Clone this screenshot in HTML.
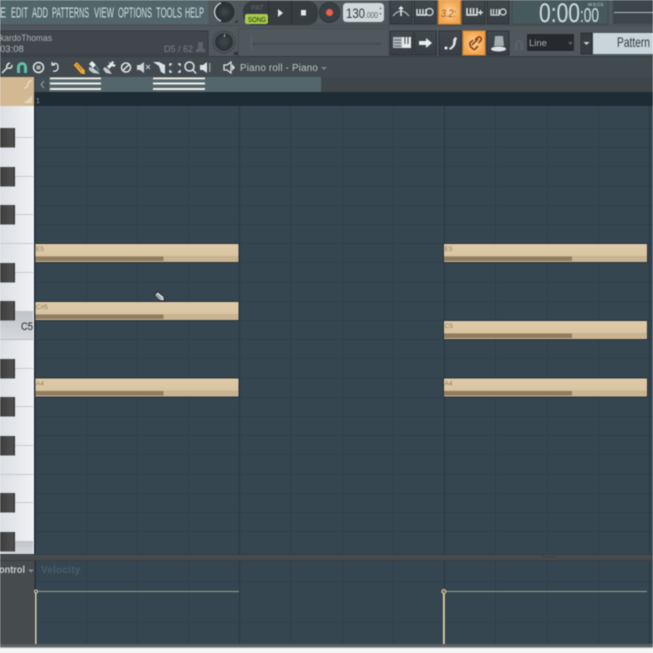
<!DOCTYPE html>
<html><head><meta charset="utf-8"><style>
html,body{margin:0;padding:0;background:#f4f5f5;width:653px;height:653px;overflow:hidden}
svg{display:block;filter:blur(.45px)}
text{font-family:"Liberation Sans",sans-serif}
</style></head><body>
<svg width="653" height="653" viewBox="0 0 653 653" xmlns="http://www.w3.org/2000/svg">
<defs>
<linearGradient id="btn" x1="0" y1="0" x2="0" y2="1"><stop offset="0" stop-color="#42494e"/><stop offset="1" stop-color="#383f44"/></linearGradient>
<radialGradient id="org"><stop offset="0" stop-color="#fbd6a0"/><stop offset="1" stop-color="#f2a44c"/></radialGradient>
<linearGradient id="note" x1="0" y1="0" x2="0" y2="1"><stop offset="0" stop-color="#dfcba9"/><stop offset="1" stop-color="#d6c19d"/></linearGradient>
<linearGradient id="wk" x1="0" y1="0" x2="1" y2="0"><stop offset="0" stop-color="#dcdfe4"/><stop offset="1" stop-color="#eff1f5"/></linearGradient>
<linearGradient id="bk" x1="0" y1="0" x2="1" y2="0"><stop offset="0" stop-color="#3d3d3d"/><stop offset=".85" stop-color="#4f4f4f"/><stop offset="1" stop-color="#2b2b2b"/></linearGradient>
<radialGradient id="knob"><stop offset="0" stop-color="#414a4e"/><stop offset="1" stop-color="#2a3033"/></radialGradient>
<linearGradient id="shade" x1="0" y1="0" x2="0" y2="1"><stop offset="0" stop-color="#bfc4ca"/><stop offset="1" stop-color="#d6d9dd"/></linearGradient>
</defs>

<!-- top area -->
<rect x="0" y="0" width="653" height="57" fill="#51585d"/>
<rect x="0" y="0" width="208" height="24" fill="#50666a"/>
<rect x="0" y="25" width="653" height="1" fill="#464c51"/>
<rect x="0" y="31" width="208" height="24" fill="#40464b" stroke="#33393d"/>
<rect x="238" y="28" width="150" height="1" fill="#474d52"/>
<rect x="238" y="28" width="1" height="29" fill="#474d52"/>
<g fill="#d6dfe1" font-size="14.500">
<text x="0" y="17.500" textLength="6" lengthAdjust="spacingAndGlyphs">E</text>
<text x="11" y="17.500" textLength="17" lengthAdjust="spacingAndGlyphs">EDIT</text>
<text x="32" y="17.500" textLength="16" lengthAdjust="spacingAndGlyphs">ADD</text>
<text x="52" y="17.500" textLength="37" lengthAdjust="spacingAndGlyphs">PATTERNS</text>
<text x="94" y="17.500" textLength="20" lengthAdjust="spacingAndGlyphs">VIEW</text>
<text x="118" y="17.500" textLength="34" lengthAdjust="spacingAndGlyphs">OPTIONS</text>
<text x="156" y="17.500" textLength="26" lengthAdjust="spacingAndGlyphs">TOOLS</text>
<text x="185" y="17.500" textLength="19" lengthAdjust="spacingAndGlyphs">HELP</text>
</g>
<text x="0" y="41" font-size="9.500" fill="#a9b0b3" textLength="52" lengthAdjust="spacingAndGlyphs">kardoThomas</text>
<text x="0" y="52" font-size="9.500" fill="#b4bbbe">03:08</text>
<text x="164" y="52" font-size="9" fill="#7b8286" textLength="29" lengthAdjust="spacingAndGlyphs">D5 / 62</text>
<path d="M198 42h5v7h2v3h-9v-3h2z" fill="#5c6367"/>

<!-- knobs -->
<circle cx="224" cy="12" r="10.500" fill="#2b3135"/>
<path d="M221 21A9.500 9.500 0 0 1 221 3" fill="none" stroke="#d8dfe1" stroke-width="1.300"/>
<circle cx="224.500" cy="12" r="7.500" fill="url(#knob)"/>
<path d="M234 23l4-4v4z" fill="#33393d"/>
<circle cx="224" cy="42" r="11" fill="none" stroke="#30363a" stroke-width="1.200" stroke-dasharray="1.500 1.500"/>
<circle cx="224" cy="42" r="9" fill="url(#knob)"/>
<rect x="224" y="34" width="1" height="3" fill="#aab2b5"/>
<rect x="234" y="52" width="4" height="3" fill="#2d3336"/>

<!-- slider -->
<rect x="251" y="42.500" width="130" height="2.500" fill="#484e53"/>
<rect x="251" y="36" width="1" height="14" fill="#5e656a"/>

<!-- transport -->
<rect x="243" y="1" width="75" height="24" rx="10" fill="#363c40"/>
<rect x="268" y="1" width="1" height="24" fill="#282d30"/>
<rect x="291" y="1" width="1" height="24" fill="#282d30"/>
<text x="251" y="10" font-size="7" fill="#626a6e">PAT</text>
<rect x="245" y="14" width="23" height="10" rx="2" fill="#a8cc4c"/>
<text x="248" y="22" font-size="7.500" fill="#23300f" textLength="18" lengthAdjust="spacingAndGlyphs">SONG</text>
<path d="M278 9l5 4-5 4z" fill="#e2e7e8"/>
<rect x="301" y="10" width="5" height="5.500" fill="#e2e7e8"/>
<circle cx="329.500" cy="12.500" r="10" fill="#394045" stroke="#2c3236"/>
<circle cx="329.500" cy="12.500" r="3.500" fill="#f0604a"/>

<!-- tempo -->
<rect x="343" y="3" width="41" height="19" rx="3.500" fill="#cfd8db"/>
<text x="346" y="18" font-size="14" fill="#2f383c" textLength="19" lengthAdjust="spacingAndGlyphs">130</text>
<text x="365" y="18" font-size="8" fill="#5a6469" textLength="13" lengthAdjust="spacingAndGlyphs">.000</text>
<path d="M379 9l1.500-2 1.500 2zM379 13l1.500 2 1.500-2z" fill="#7a848a"/>

<rect x="388" y="0" width="1" height="57" fill="#474d52"/>
<!-- button rows -->
<g stroke="#2d3337" stroke-width="1">
<rect x="390" y="0" width="22" height="24" fill="url(#btn)"/>
<rect x="414" y="0" width="22" height="24" fill="url(#btn)"/>
<rect x="438.500" y="0" width="22" height="24" fill="url(#org)" stroke="#d77f2a"/>
<rect x="463" y="0" width="22" height="24" fill="url(#btn)"/>
<rect x="487" y="0" width="22" height="24" fill="url(#btn)"/>
<rect x="390" y="31" width="23" height="24" fill="url(#btn)"/>
<rect x="414.500" y="31" width="22" height="24" fill="url(#btn)"/>
<rect x="439" y="31" width="22" height="24" fill="url(#btn)"/>
<rect x="463" y="31" width="22" height="24" fill="url(#org)" stroke="#d77f2a"/>
<rect x="487" y="31" width="22" height="24" fill="url(#btn)"/>
</g>
<!-- row 1 icons -->
<path d="M393 16q8-10 16 0" fill="none" stroke="#c8d0d2" stroke-width="1"/>
<path d="M401 8v8M399 9l2-2 2 2" fill="none" stroke="#e6ebec" stroke-width="1.500"/>
<path d="M417 9v6h9V9M420 9v5M423 9v5" fill="none" stroke="#e6ebec" stroke-width="1.400"/>
<circle cx="429.500" cy="12" r="3.500" fill="none" stroke="#dbe1e3" stroke-width="1.200"/>
<text x="441" y="17" font-size="11" fill="#a2521a" font-style="italic" textLength="15" lengthAdjust="spacingAndGlyphs">3.2:</text>
<path d="M467 8v7h10V8M470.500 8v6M473.500 8v6" fill="none" stroke="#e6ebec" stroke-width="1.500"/>
<path d="M478 12.500h5M480.500 10v5" stroke="#e6ebec" stroke-width="1.300"/>
<path d="M491 9v6h8V9M493.500 9v5M496.500 9v5" fill="none" stroke="#dbe1e3" stroke-width="1.200"/>
<circle cx="503" cy="12" r="3" fill="none" stroke="#dbe1e3" stroke-width="1.200"/>
<!-- row 2 icons -->
<rect x="393" y="37" width="9" height="11" fill="#aeb6b9"/>
<path d="M402 37h9v11h-9z" fill="#e6ebec"/>
<path d="M405 37v7M408 37v7" stroke="#3a4145" stroke-width="1"/>
<path d="M394 40h7M394 43h7M394 46h7" stroke="#464d51" stroke-width=".8"/>
<path d="M419 41h7v-3l6 5-6 5v-3h-7z" fill="#e8edee"/>
<path d="M449 48q5-2 4-8l2-3 2 1-1 3q0 6-6 9z" fill="#dfe5e6"/>
<circle cx="446" cy="48" r="1.500" fill="#eef2f3"/>
<path d="M470 46l3 3q2 1 3-1l2-2M475 40l2-2q2-2 3.500-.500 1.500 1.500 0 3.500l-2 2M471 46l-1-1q-1-2 1-3l2-2M472 45l6-6" fill="none" stroke="#8d4510" stroke-width="1.600"/>
<path d="M495 36h8l1 10h-10z" fill="#a3abae"/>
<ellipse cx="498.500" cy="49" rx="7.500" ry="2.500" fill="#dfe5e6"/>

<!-- magnet -->
<path d="M515 50v-6a4 4 0 0 1 8 0v6h-2.500v-6a1.500 1.500 0 0 0-3 0v6z" fill="#5b6367"/>
<!-- line dropdown -->
<rect x="527" y="34" width="47" height="17" rx="1" fill="#26292e"/>
<text x="529" y="46" font-size="9.500" fill="#aab2b5">Line</text>
<path d="M568 42h5l-2.500 3z" fill="#5a6266"/>
<!-- pattern -->
<rect x="581" y="33" width="11" height="21" fill="#363c40" stroke="#2b3034"/>
<path d="M583.500 42h6l-3 3z" fill="#cfd6d8"/>
<rect x="593" y="33" width="60" height="21" fill="#c8d6dc"/>
<text x="617" y="47" font-size="14" fill="#2f383c" textLength="33" lengthAdjust="spacingAndGlyphs">Pattern</text>

<!-- time -->
<rect x="512" y="0" width="96" height="24" fill="#465a5e" stroke="#40474b"/>
<text x="539" y="22" font-size="27" fill="#d5dee0" textLength="41" lengthAdjust="spacingAndGlyphs">0:00</text>
<text x="580" y="22" font-size="20" fill="#d5dee0" textLength="19" lengthAdjust="spacingAndGlyphs">:00</text>
<text x="588" y="6" font-size="4.500" fill="#ccd4d6">M:S:CS</text>
<rect x="613" y="0" width="40" height="24" fill="#3d464a"/>
<rect x="614" y="12" width="39" height="1" fill="#b1bbbe"/>

<!-- toolbar band -->
<rect x="0" y="56" width="653" height="21" fill="#414a4f"/>
<rect x="0" y="56" width="653" height="1" fill="#353b3f"/>
<g fill="none" stroke="#dfe5e6" stroke-width="1.500">
<path d="M2 73l5-5q-1-4 3-5M8 68q4 1 4-3"/>
<circle cx="38.500" cy="67.500" r="5"/>
<path d="M53 64q5-2 5 3t-5 4M52 62v3h3" stroke-width="1.300"/>
<circle cx="126" cy="67.500" r="4.500"/><path d="M123 70.500l6-6"/>
<path d="M170 66v-2h2M178 64h2v2M180 70v2h-2M172 72h-2v-2"/>
<circle cx="189.500" cy="66.500" r="4.500"/><path d="M193 70l3 3.500"/>
</g>
<rect x="36.500" y="65.500" width="4" height="4" fill="#a9b1b3"/>
<path d="M17 73v-6a5 5 0 0 1 10 0v6h-3v-6a2 2 0 0 0-4 0v6z" fill="#5fc1ac"/>
<!-- pencil -->
<path d="M73 65l4-3.500 8 8.500.5 4.500-4.500-.5z" fill="#eaa840" stroke="#3f3a28" stroke-width=".6"/>
<path d="M76 66l4-3M78 68l4-3M80 70l3-3" stroke="#7a5a20" stroke-width=".7"/>
<!-- brush -->
<path d="M92 61l4 4-3 3-4-4z" fill="#e6ebec"/>
<path d="M89 67l4 1 4 3 3 3-7-1-4-3z" fill="#c3cbce"/>
<path d="M96 66l3 5" stroke="#5ea0b0" stroke-width="1"/>
<!-- paint -->
<path d="M108 62l3 1 1-2 2 1-1 2 3 1-2 2-2-1-3 3-2-3 3-2z" fill="#e6ebec"/>
<path d="M105 67l4 3 3 4-6-1-3-4z" fill="#c3cbce"/>
<!-- mute -->
<path d="M137 65h3l4-3v11l-4-3h-3z" fill="#cfd6d8"/>
<path d="M146 65l4 4M150 65l-4 4" stroke="#bfc6c9"/>
<!-- slice -->
<path d="M153 62h6l6 3v9l-4-2-2-6z" fill="#dce2e3"/>
<!-- speaker -->
<path d="M200 65h3l4-3v11l-4-3h-3z" fill="#dfe5e6"/>
<rect x="209" y="63" width="1.500" height="9" fill="#8f979a"/>
<path d="M224 65h3l4-3v11l-4-3h-3z" fill="none" stroke="#dfe5e6" stroke-width="1.200"/>
<path d="M232 64l3 3.500-3 3.500z" fill="#dfe5e6"/>
<text x="240" y="71" font-size="10" fill="#bfc7ca" letter-spacing=".2" textLength="78" lengthAdjust="spacingAndGlyphs">Piano roll - Piano</text>
<path d="M321 67h6l-3 3z" fill="#7d8589"/>

<!-- overview strip -->
<rect x="0" y="77" width="653" height="15" fill="#3f464a"/>
<rect x="36" y="77" width="285" height="15" fill="#53666c"/>
<rect x="36" y="77" width="13" height="15" fill="#414e53"/>
<path d="M44 81l-3 3.500 3 3.500" fill="none" stroke="#9aa3a6" stroke-width="1"/>
<g fill="#f2efe6">
<rect x="50" y="77.500" width="51" height="1.800"/><rect x="50" y="82.500" width="51" height="2"/><rect x="50" y="88" width="51" height="2"/>
<rect x="153" y="77.500" width="52" height="1.800"/><rect x="153" y="82.500" width="52" height="2"/><rect x="153" y="88" width="52" height="2"/>
</g>
<!-- timeline -->
<rect x="34" y="92" width="619" height="14" fill="#1e2c35"/>
<text x="36" y="103" font-size="7" fill="#9aa4a8">1</text>
<!-- tan corner -->
<rect x="0" y="77" width="34" height="29" fill="#d3b992"/>
<path d="M24 88q3 0 4-4t4-3" fill="none" stroke="#eee3cf" stroke-width="1.200"/>
<path d="M24 103l8-7v7z" fill="#e5d6ba"/>

<!-- piano -->
<rect x="0" y="106" width="33" height="449" fill="url(#wk)"/>
<rect x="32" y="106" width="2" height="449" fill="#f4f6f9"/>
<rect x="34" y="106" width="1.500" height="449" fill="#202b33"/>
<g fill="#c6cbd0">
<rect x="15" y="137" width="18" height="1"/><rect x="15" y="176" width="18" height="1"/><rect x="15" y="214" width="18" height="1"/>
<rect x="0" y="243" width="33" height="1"/><rect x="15" y="272" width="18" height="1"/>
<rect x="15" y="368" width="18" height="1"/><rect x="15" y="406" width="18" height="1"/><rect x="15" y="445" width="18" height="1"/>
<rect x="0" y="474" width="33" height="1"/><rect x="15" y="502" width="18" height="1"/>
</g>
<rect x="0" y="311" width="33" height="28" fill="url(#shade)"/>
<rect x="0" y="339" width="33" height="1" fill="#b6bbc0"/>
<rect x="0" y="541" width="33" height="14" fill="url(#shade)"/>
<g fill="url(#bk)">
<rect x="0" y="128" width="15" height="19.500"/><rect x="0" y="167" width="15" height="19.500"/><rect x="0" y="205" width="15" height="19.500"/>
<rect x="0" y="263" width="15" height="19.500"/><rect x="0" y="301" width="15" height="19.500"/>
<rect x="0" y="359" width="15" height="19.500"/><rect x="0" y="397" width="15" height="19.500"/><rect x="0" y="436" width="15" height="19.500"/>
<rect x="0" y="493" width="15" height="19.500"/><rect x="0" y="532" width="15" height="19.500"/>
</g>
<text x="21" y="330" font-size="11" fill="#3e464c" textLength="12" lengthAdjust="spacingAndGlyphs" stroke="#3e464c" stroke-width=".3">C5</text>

<!-- grid -->
<rect x="35.500" y="106" width="618" height="449" fill="#354651"/>
<g stroke="#2f404b" stroke-width="1">
<path d="M36 128.500H653M36 147.500H653M36 166.500H653M36 186.500H653M36 205.500H653M36 224.500H653M36 243.500H653M36 262.500H653M36 282.500H653M36 301.500H653M36 320.500H653M36 339.500H653M36 358.500H653M36 378.500H653M36 397.500H653M36 416.500H653M36 435.500H653M36 454.500H653M36 474.500H653M36 493.500H653M36 512.500H653M36 531.500H653"/>
<path d="M86.500 106V555M137.500 106V555M188.500 106V555M290.500 106V555M342.500 106V555M393.500 106V555M495.500 106V555M547.500 106V555M598.500 106V555"/>
</g>
<path d="M239.500 106V555M444.500 106V555M649.500 106V555" stroke="#293842" stroke-width="1"/>

<!-- notes -->
<g>
<g transform="translate(34.500,243)"><rect x=".5" y=".5" width="204" height="19" fill="url(#note)" stroke="#26323a"/><rect x="1" y="13" width="203" height="5.500" fill="#c9b491"/><rect x="1" y="13.500" width="128" height="4.500" fill="#8f7d5f"/><text x="1.500" y="8" font-size="6.500" fill="#8f7e5c">E5</text></g>
<g transform="translate(34.500,301)"><rect x=".5" y=".5" width="204" height="19" fill="url(#note)" stroke="#26323a"/><rect x="1" y="13" width="203" height="5.500" fill="#c9b491"/><rect x="1" y="13.500" width="128" height="4.500" fill="#8f7d5f"/><text x="1.500" y="8" font-size="6.500" fill="#8f7e5c">C#5</text></g>
<g transform="translate(34.500,377.500)"><rect x=".5" y=".5" width="204" height="19" fill="url(#note)" stroke="#26323a"/><rect x="1" y="13" width="203" height="5.500" fill="#c9b491"/><rect x="1" y="13.500" width="128" height="4.500" fill="#8f7d5f"/><text x="1.500" y="8" font-size="6.500" fill="#8f7e5c">A4</text></g>
<g transform="translate(443,243)"><rect x=".5" y=".5" width="204" height="19" fill="url(#note)" stroke="#26323a"/><rect x="1" y="13" width="203" height="5.500" fill="#c9b491"/><rect x="1" y="13.500" width="128" height="4.500" fill="#8f7d5f"/><text x="1.500" y="8" font-size="6.500" fill="#8f7e5c">E5</text></g>
<g transform="translate(443,320)"><rect x=".5" y=".5" width="204" height="19" fill="url(#note)" stroke="#26323a"/><rect x="1" y="13" width="203" height="5.500" fill="#c9b491"/><rect x="1" y="13.500" width="128" height="4.500" fill="#8f7d5f"/><text x="1.500" y="8" font-size="6.500" fill="#8f7e5c">C5</text></g>
<g transform="translate(443,377.500)"><rect x=".5" y=".5" width="204" height="19" fill="url(#note)" stroke="#26323a"/><rect x="1" y="13" width="203" height="5.500" fill="#c9b491"/><rect x="1" y="13.500" width="128" height="4.500" fill="#8f7d5f"/><text x="1.500" y="8" font-size="6.500" fill="#8f7e5c">A4</text></g>
</g>

<!-- cursor -->
<path d="M154.500 295l3-3.500 6.500 5 .5 4.500-4.500-.5z" fill="#c9d0d3" stroke="#1d262c" stroke-width="1"/>
<path d="M157 295l4 3.500M155.500 296.500l4 3.500" stroke="#5b6367" stroke-width=".6"/>

<!-- divider -->
<rect x="0" y="554" width="653" height="7" fill="#464b4f"/>
<rect x="0" y="554" width="653" height="1" fill="#383e42"/>
<rect x="0" y="560" width="653" height="1" fill="#363c40"/>
<path d="M543 557h12" stroke="#2e3337" stroke-width="1" stroke-dasharray="1 1"/>

<!-- control panel -->
<rect x="0" y="561" width="35" height="83" fill="#464b4e"/>
<text x="-1" y="573" font-size="10" font-weight="bold" fill="#c4cbce" textLength="26" lengthAdjust="spacingAndGlyphs">ontrol</text>
<path d="M28 569.500h6l-3 3z" fill="#8a9195"/>
<rect x="35" y="561" width="618" height="83" fill="#354651"/>
<rect x="34.500" y="561" width="1.500" height="83" fill="#24313a"/>
<g stroke="#2f404b" stroke-width="1">
<path d="M36 581.500H653M36 622.500H653"/>
<path d="M86.500 561V644M137.500 561V644M188.500 561V644M290.500 561V644M342.500 561V644M393.500 561V644M495.500 561V644M547.500 561V644M598.500 561V644"/>
</g>
<path d="M239.500 561V644M444.500 561V644M649.500 561V644" stroke="#293842" stroke-width="1"/>
<text x="41" y="573" font-size="10" font-weight="bold" fill="#4a5c67" letter-spacing=".2">Velocity</text>
<path d="M36 591.500H239M444 591.500H647" stroke="#9d9a8a" stroke-width="1"/>
<rect x="35" y="591" width="1.500" height="53" fill="#e0cfae"/>
<rect x="443" y="591" width="1.800" height="53" fill="#e0cfae"/>
<circle cx="36" cy="591.500" r="1.500" fill="#35464f" stroke="#d9c7a5"/>
<circle cx="443.800" cy="591.500" r="2" fill="#7f6d52" stroke="#d9c7a5"/>
<!-- bottom -->
<rect x="0" y="644" width="653" height="4" fill="#5a5f63"/>
<rect x="0" y="647" width="653" height="1" fill="#a3a7a9"/>
<rect x="0" y="648" width="653" height="5" fill="#f4f5f5"/>
</svg>
</body></html>
